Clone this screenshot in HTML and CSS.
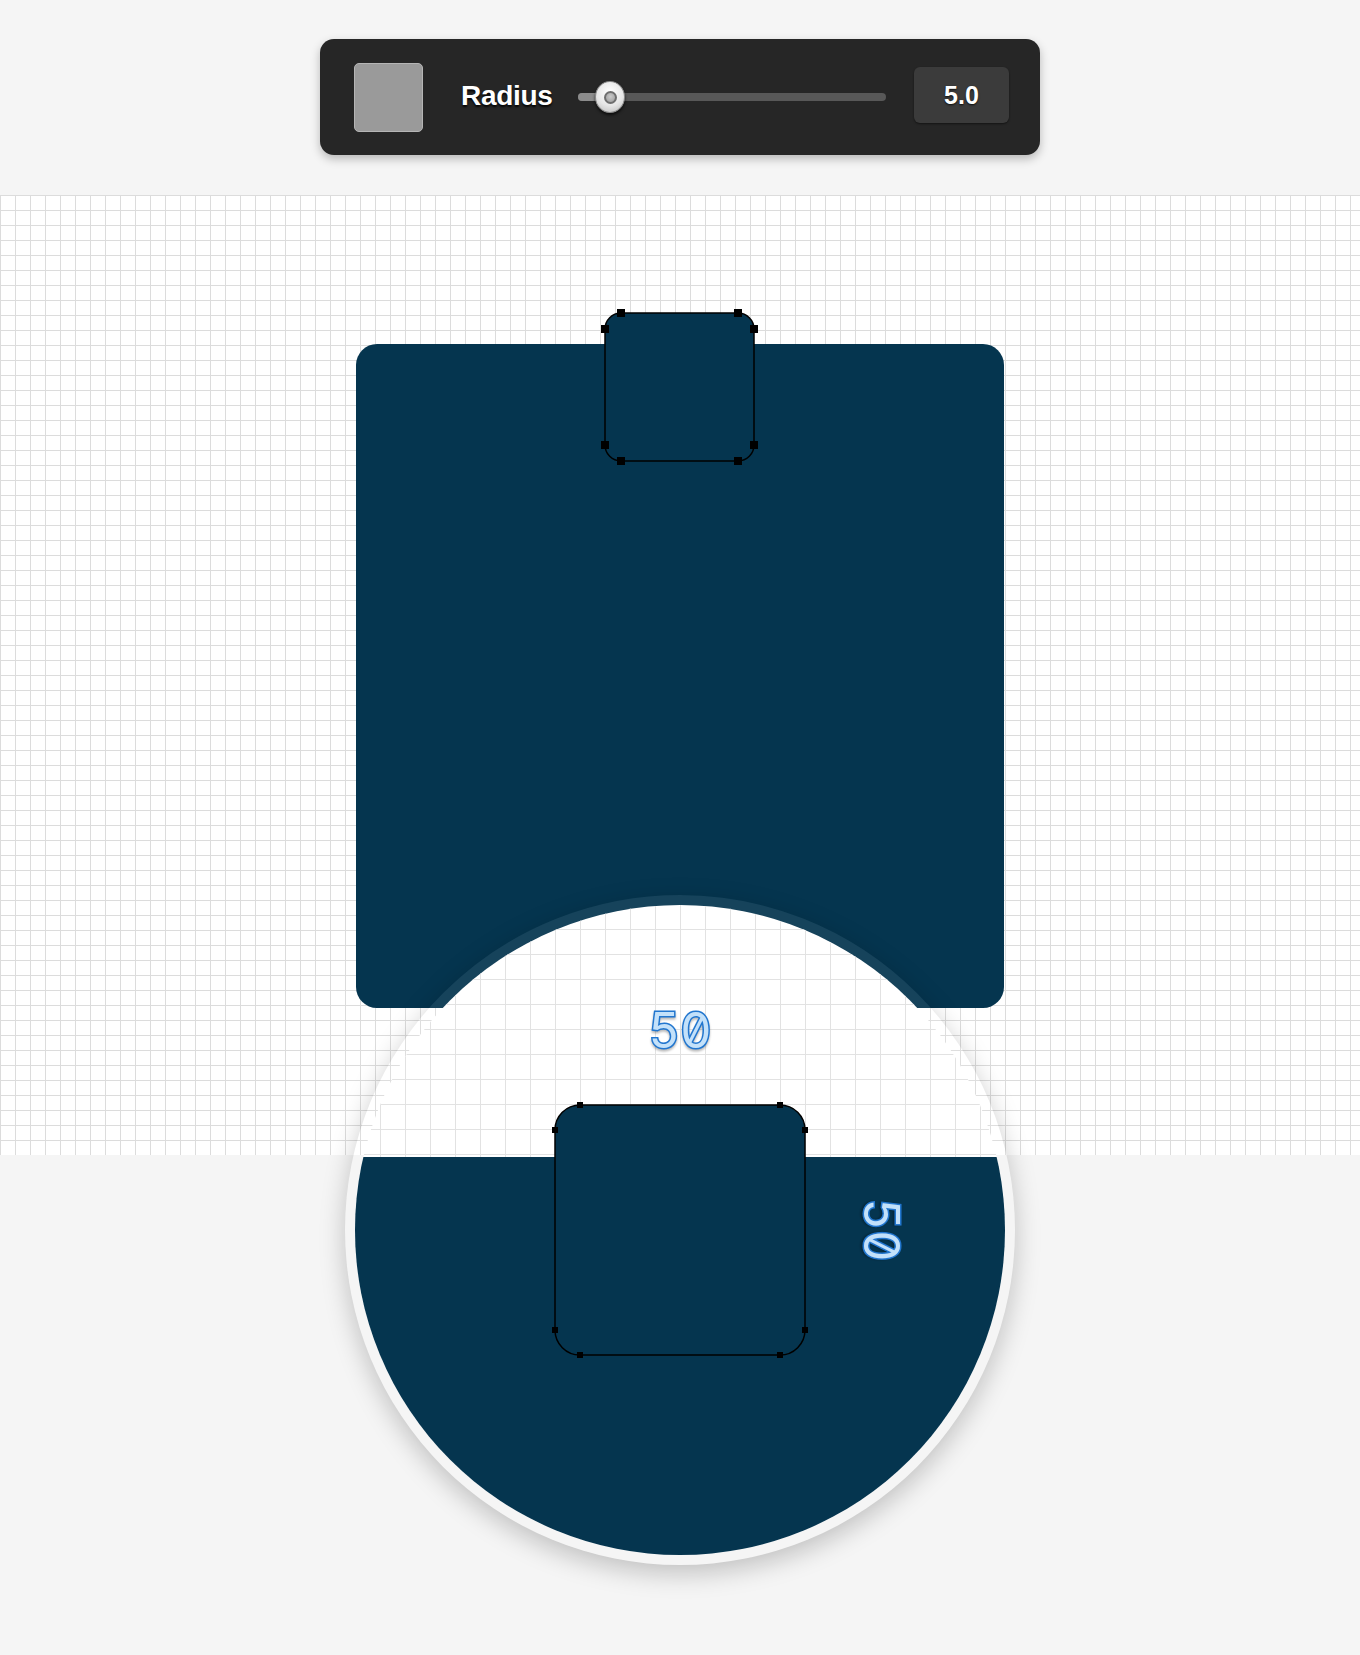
FILE: index.html
```html
<!DOCTYPE html>
<html>
<head>
<meta charset="utf-8">
<title>Radius</title>
<link rel="stylesheet" href="styles.css">
</head>
<body>
<header class="top">
  <div class="toolbar">
    <div class="swatch"></div>
    <div class="label">Radius</div>
    <div class="slider">
      <div class="track"><div class="fill"></div></div>
      <div class="knob"><div class="knob-dot"></div></div>
    </div>
    <div class="value">5.0</div>
  </div>
</header>
<main class="canvas">
  <div class="big-rect"></div>
  <svg class="small-shape" width="170" height="170" viewBox="0 0 170 170">
    <rect x="10" y="10" width="149" height="148" rx="16" ry="16" class="shape-fill"/>
    <g class="handle8">
      <rect x="22" y="6" width="8" height="8"/>
      <rect x="6" y="22" width="8" height="8"/>
      <rect x="139" y="6" width="8" height="8"/>
      <rect x="155" y="22" width="8" height="8"/>
      <rect x="6" y="138" width="8" height="8"/>
      <rect x="22" y="154" width="8" height="8"/>
      <rect x="139" y="154" width="8" height="8"/>
      <rect x="155" y="138" width="8" height="8"/>
    </g>
  </svg>
  <div class="lens">
    <svg class="lens-view" width="650" height="650" viewBox="0 0 650 650">
      <defs>
        <pattern id="lensgrid" width="25" height="25" patternUnits="userSpaceOnUse" x="0" y="-1">
          <path d="M0 0.5H25M0.5 0V25" class="lens-line"/>
        </pattern>
      </defs>
      <rect x="0" y="0" width="650" height="650" class="lens-bg"/>
      <rect x="0" y="0" width="650" height="650" fill="url(#lensgrid)"/>
      <rect x="0" y="252" width="650" height="400" class="lens-dark"/>
      <rect x="200" y="200" width="250" height="250" rx="25" ry="25" class="shape-fill"/>
      <g class="handle6">
        <rect x="222" y="197" width="6" height="6"/>
        <rect x="197" y="222" width="6" height="6"/>
        <rect x="422" y="197" width="6" height="6"/>
        <rect x="447" y="222" width="6" height="6"/>
        <rect x="197" y="422" width="6" height="6"/>
        <rect x="222" y="447" width="6" height="6"/>
        <rect x="422" y="447" width="6" height="6"/>
        <rect x="447" y="422" width="6" height="6"/>
      </g>
      <text x="325" y="143" class="dim" text-anchor="middle">50</text>
      <g transform="translate(527 325) rotate(90)">
        <text x="0" y="18" class="dim" text-anchor="middle">50</text>
      </g>
    </svg>
  </div>
</main>
</body>
</html>
```

FILE: styles.css
```css
html, body {
  margin: 0;
  padding: 0;
}
body {
  background: #f5f5f5;
  font-family: "Liberation Sans", Arial, sans-serif;
  height: 1655px;
  overflow: hidden;
}
.top {
  height: 195px;
  box-sizing: border-box;
  padding-top: 39px;
  display: flex;
  justify-content: center;
  align-items: flex-start;
}
.toolbar {
  width: 720px;
  height: 116px;
  box-sizing: border-box;
  background: #262626;
  border-radius: 14px;
  box-shadow: 0 4px 10px rgba(0, 0, 0, 0.25);
  display: flex;
  align-items: center;
  padding: 0 30px 0 34px;
}
.swatch {
  width: 69px;
  height: 69px;
  box-sizing: border-box;
  background: #9a9a9a;
  border: 1px solid #b5b5b5;
  border-radius: 5px;
  flex: none;
}
.label {
  margin-left: 38px;
  color: #fff;
  font-weight: bold;
  font-size: 28px;
  letter-spacing: -0.3px;
  text-shadow: 0 2px 2px rgba(0, 0, 0, 0.9);
  width: 91px;
  flex: none;
  position: relative;
  top: -1px;
}
.slider {
  margin-left: 26px;
  width: 308px;
  height: 32px;
  position: relative;
  flex: none;
  display: flex;
  align-items: center;
}
.track {
  width: 100%;
  height: 8px;
  border-radius: 4px;
  background: #585858;
  overflow: hidden;
}
.fill {
  width: 34px;
  height: 100%;
  background: #8c8c8c;
}
.knob {
  position: absolute;
  left: 17px;
  top: 0;
  width: 30px;
  height: 32px;
  box-sizing: border-box;
  border-radius: 50%;
  background: radial-gradient(circle at 50% 35%, #ffffff 0%, #e6e6e6 55%, #b9b9b9 100%);
  border: 1px solid #8a8a8a;
  box-shadow: 0 2px 3px rgba(0, 0, 0, 0.7);
  display: flex;
  align-items: center;
  justify-content: center;
}
.knob-dot {
  width: 13px;
  height: 13px;
  border-radius: 50%;
  box-sizing: border-box;
  background: radial-gradient(circle at 50% 40%, #c9c9c9 0%, #9a9a9a 100%);
  border: 2px solid #6e6e6e;
}
.value {
  margin-left: 28px;
  margin-bottom: 4px;
  width: 95px;
  height: 56px;
  border-radius: 6px;
  background: #3b3b3b;
  box-shadow: 0 1px 2px rgba(0, 0, 0, 0.5);
  color: #fff;
  font-weight: bold;
  font-size: 25px;
  display: flex;
  align-items: center;
  justify-content: center;
  text-shadow: 0 1px 2px rgba(0, 0, 0, 0.8);
  flex: none;
}
.canvas {
  position: relative;
  height: 960px;
  background-color: #ffffff;
  background-image:
    linear-gradient(to right, #dcdcdc 1px, transparent 1px),
    linear-gradient(to bottom, #dcdcdc 1px, transparent 1px);
  background-size: 15px 15px;
}
.big-rect {
  position: absolute;
  left: 356px;
  top: 149px;
  width: 648px;
  height: 664px;
  border-radius: 21px;
  background: #05354f;
}
.small-shape {
  position: absolute;
  left: 595px;
  top: 108px;
  display: block;
}
.shape-fill {
  fill: #05354f;
  stroke: #000;
  stroke-width: 1.5;
}
.handle8 rect, .handle6 rect {
  fill: #000;
}
.lens {
  position: absolute;
  left: 345px;
  top: 700px;
  width: 670px;
  height: 670px;
  box-sizing: border-box;
  border-radius: 50%;
  border: 10px solid rgba(255, 255, 255, 0.07);
  box-shadow: 0 8px 26px rgba(0, 0, 0, 0.22);
  overflow: hidden;
}
.lens-view {
  display: block;
}
.lens-bg {
  fill: #ffffff;
}
.lens-line {
  stroke: #e2e2e2;
  stroke-width: 1;
  fill: none;
}
.lens-dark {
  fill: #05354f;
}
.dim {
  font-family: Inter, "DejaVu Sans Mono", monospace;
  font-feature-settings: "zero" 1, "tnum" 1;
  font-weight: 400;
  font-size: 49px;
  fill: #c3e1fa;
  stroke: #2176cf;
  stroke-width: 3px;
  paint-order: stroke;
  filter: drop-shadow(0 2px 1px rgba(0, 0, 0, 0.28));
}
```
